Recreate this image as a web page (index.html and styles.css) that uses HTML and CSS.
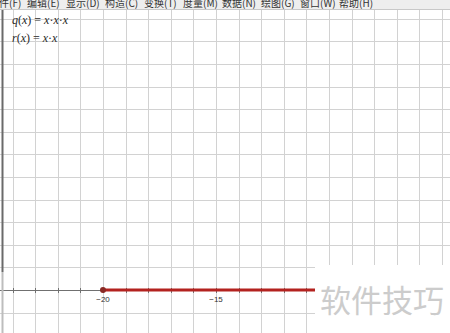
FILE: index.html
```html
<!DOCTYPE html>
<html lang="zh-CN">
  <head>
    <meta charset="UTF-8" />
    <title>几何画板</title>
    <link rel="stylesheet" href="styles.css">
  </head>
  <body>
    <div class="menubar">
      <span class="menu first">件(F)</span>
      <span class="menu">编辑(E)</span>
      <span class="menu">显示(D)</span>
      <span class="menu">构造(C)</span>
      <span class="menu">变换(T)</span>
      <span class="menu">度量(M)</span>
      <span class="menu">数据(N)</span>
      <span class="menu">绘图(G)</span>
      <span class="menu">窗口(W)</span>
      <span class="menu">帮助(H)</span>
    </div>

    <div class="board">
      <svg class="plane" width="450" height="323" viewBox="0 10 450 323">
        <g class="grid" id="grid"></g>
        <g class="axis" id="axis"></g>
        <line class="edge" x1="2.5" y1="10" x2="2.5" y2="272" />
        <line class="edge-low" x1="2.5" y1="272" x2="2.5" y2="333" />
        <line class="graph" x1="103" y1="290" x2="316" y2="290" />
        <circle class="endpoint" cx="103" cy="290" r="3" />
        <text class="tick-label" x="103" y="302">−20</text>
        <text class="tick-label" x="216" y="302">−15</text>
        <text class="func" x="12" y="24"><tspan class="it">q</tspan>(<tspan class="it">x</tspan>) = <tspan class="it">x</tspan>·<tspan class="it">x</tspan>·<tspan class="it">x</tspan></text>
        <text class="func" x="12" y="42"><tspan class="it">r</tspan>(<tspan class="it">x</tspan>) = <tspan class="it">x</tspan>·<tspan class="it">x</tspan></text>
      </svg>
      <div class="watermark">软件技巧</div>
    </div>

    <script>
      // grid spacing in pixels, one unit per cell
      const step = 22.6;
      const originY = 290;
      const firstX = 12.6;
      const ns = "http://www.w3.org/2000/svg";
      const grid = document.getElementById("grid");
      const axis = document.getElementById("axis");

      function addLine(parent, x1, y1, x2, y2) {
        const l = document.createElementNS(ns, "line");
        l.setAttribute("x1", x1);
        l.setAttribute("y1", y1);
        l.setAttribute("x2", x2);
        l.setAttribute("y2", y2);
        parent.appendChild(l);
      }

      // vertical lines
      for (let k = 0; k < 20; k++) {
        const x = Math.round(firstX + k * step) + 0.5;
        addLine(grid, x, 10, x, 333);
        addLine(axis, x, originY - 2, x, originY + 3);
      }

      // horizontal lines (skip the axis itself)
      for (let k = -1; k <= 12; k++) {
        if (k === 0) continue;
        const y = Math.round(originY - k * step) + 0.5;
        addLine(grid, 0, y, 450, y);
      }
      addLine(axis, 0, originY + 0.5, 450, originY + 0.5);
    </script>
  </body>
</html>
```

FILE: styles.css
```css
body {
  margin: 0;
  width: 450px;
  height: 333px;
  overflow: hidden;
  background-color: #ffffff;
  font-family: "Noto Sans CJK SC", "Liberation Sans", sans-serif;
}

.menubar {
  display: flex;
  height: 9px;
  overflow: hidden;
  background-color: #eeeeee;
  border-bottom: 1px solid #c8c8c8;
  font-size: 10px;
  line-height: 11px;
  color: #333;
}

.menu {
  flex: 0 0 39px;
  margin-top: -3px;
  white-space: nowrap;
}

.menu.first {
  flex-basis: 28px;
  margin-left: -1px;
}

.board {
  position: relative;
  height: 323px;
}

.plane {
  display: block;
}

.grid line {
  stroke: #d2d2d2;
  stroke-width: 1;
}

.axis line {
  stroke: #707070;
  stroke-width: 1;
}

.edge {
  stroke: #6a6a6a;
  stroke-width: 2;
}

.edge-low {
  stroke: #bdbdbd;
  stroke-width: 2;
}

.graph {
  stroke: #b3221f;
  stroke-width: 3;
}

.endpoint {
  fill: #8a2a25;
}

.tick-label {
  font-family: "Liberation Sans", Arial, sans-serif;
  font-size: 8px;
  fill: #333;
  text-anchor: middle;
}

.func {
  font-family: "Liberation Serif", "Times New Roman", serif;
  font-size: 12px;
  fill: #2a2a2a;
}

.func .it {
  font-style: italic;
}

.watermark {
  position: absolute;
  left: 315px;
  top: 255px;
  width: 135px;
  height: 68px;
  background-color: #ffffff;
  color: #cccccc;
  font-size: 31px;
  line-height: 68px;
  padding-left: 5px;
  box-sizing: border-box;
}
```
